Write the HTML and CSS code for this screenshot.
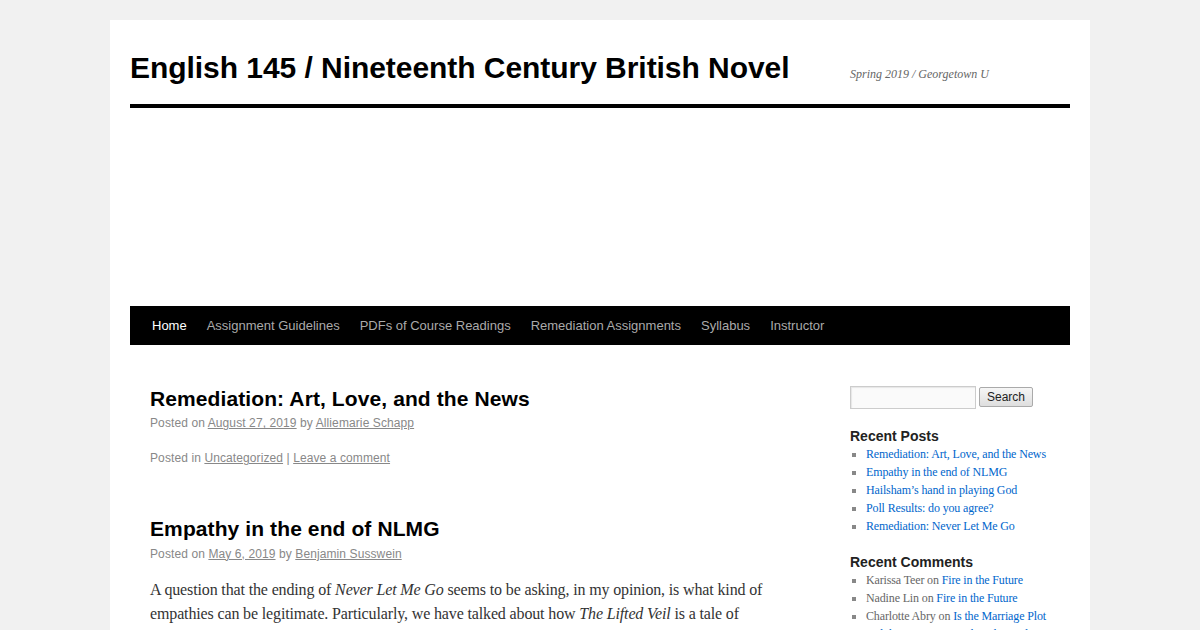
FILE: index.html
```html
<!DOCTYPE html>
<html>
<head>
  <meta charset="UTF-8">
  <link rel="stylesheet" href="styles.css">
</head>
<body>
  <div class="wrapper">
    <div class="header">
      <div class="branding">
        <h1 class="site-title"><a href="#">English 145 / Nineteenth Century British Novel</a></h1>
        <div class="site-description">Spring 2019 / Georgetown U</div>
      </div>
      <div class="header-image"></div>
      <div class="access">
        <ul class="menu">
          <li class="current"><a href="#">Home</a></li>
          <li><a href="#">Assignment Guidelines</a></li>
          <li><a href="#">PDFs of Course Readings</a></li>
          <li><a href="#">Remediation Assignments</a></li>
          <li><a href="#">Syllabus</a></li>
          <li><a href="#">Instructor</a></li>
        </ul>
      </div>
    </div>

    <div class="main">
      <div class="content">
        <div class="post">
          <h2 class="entry-title"><a href="#">Remediation: Art, Love, and the News</a></h2>
          <div class="entry-meta">Posted on <a href="#">August 27, 2019</a> by <a href="#">Alliemarie Schapp</a></div>
          <div class="entry-utility">Posted in <a href="#">Uncategorized</a> | <a href="#">Leave a comment</a></div>
        </div>

        <div class="post">
          <h2 class="entry-title"><a href="#">Empathy in the end of NLMG</a></h2>
          <div class="entry-meta">Posted on <a href="#">May 6, 2019</a> by <a href="#">Benjamin Susswein</a></div>
          <div class="entry-summary">
            <p>A question that the ending of <em>Never Let Me Go</em> seems to be asking, in my opinion, is what kind of empathies can be legitimate. Particularly, we have talked about how <em>The Lifted Veil</em> is a tale of excessive sympathy, of knowing too well what others think and feel.</p>
          </div>
        </div>
      </div>

      <div class="sidebar">
        <div class="widget search-widget">
          <form class="search-form">
            <input type="text" class="search-input">
            <button type="button" class="search-button">Search</button>
          </form>
        </div>

        <div class="widget">
          <h3 class="widget-title">Recent Posts</h3>
          <ul>
            <li><a href="#">Remediation: Art, Love, and the News</a></li>
            <li><a href="#">Empathy in the end of NLMG</a></li>
            <li><a href="#">Hailsham’s hand in playing God</a></li>
            <li><a href="#">Poll Results: do you agree?</a></li>
            <li><a href="#">Remediation: Never Let Me Go</a></li>
          </ul>
        </div>

        <div class="widget">
          <h3 class="widget-title">Recent Comments</h3>
          <ul>
            <li>Karissa Teer on <a href="#">Fire in the Future</a></li>
            <li>Nadine Lin on <a href="#">Fire in the Future</a></li>
            <li>Charlotte Abry on <a href="#">Is the Marriage Plot and the 19 Century Political Novel?</a></li>
          </ul>
        </div>
      </div>
    </div>
  </div>
</body>
</html>
```

FILE: styles.css
```css
body {
  margin: 0;
  background: #f1f1f1;
  color: #666;
  font-family: "Liberation Serif", serif;
}

a {
  color: #0066cc;
  text-decoration: none;
}

.wrapper {
  width: 940px;
  margin: 20px auto 0;
  padding: 0 20px 40px;
  background: #fff;
}

.header {
  padding-top: 30px;
}

.branding {
  display: flex;
  align-items: flex-start;
}

.site-title {
  width: 700px;
  margin: 0 0 18px 0;
  font-family: "Liberation Sans", Arial, sans-serif;
  font-size: 30px;
  line-height: 36px;
  font-weight: bold;
  letter-spacing: -0.05px;
}

.site-title a {
  color: #000;
}

.site-description {
  width: 220px;
  margin: 15px 0 18px auto;
  font-size: 12px;
  line-height: 18px;
  font-style: italic;
  color: #666;
}

.header-image {
  height: 198px;
  border-top: 4px solid #000;
  border-bottom: 1px solid #000;
}

.access {
  background: #000;
  height: 38px;
}

.menu {
  display: flex;
  list-style: none;
  margin: 0 0 0 12px;
  padding: 0;
  font-family: "Liberation Sans", Arial, sans-serif;
  font-size: 13px;
}

.menu a {
  display: block;
  padding: 0 10px;
  line-height: 38px;
  color: #aaa;
}

.menu .current a {
  color: #fff;
}

.main {
  display: flex;
  padding-top: 40px;
}

.content {
  width: 640px;
  margin-left: 20px;
}

.post {
  margin-bottom: 48px;
}

.entry-title {
  margin: 0;
  font-family: "Liberation Sans", Arial, sans-serif;
  font-size: 21px;
  line-height: 1.3em;
  font-weight: bold;
  letter-spacing: 0.1px;
}

.entry-title a {
  color: #000;
}

.entry-meta,
.entry-utility {
  font-family: "Liberation Sans", Arial, sans-serif;
  font-size: 12px;
  line-height: 18px;
  color: #888;
  margin-top: 2px;
  letter-spacing: 0.1px;
}

.entry-meta a,
.entry-utility a {
  color: #888;
  text-decoration: underline;
}

.entry-utility {
  margin-top: 17px;
}

.entry-summary {
  padding-top: 15px;
}

.entry-summary p {
  margin: 0 0 24px;
  font-size: 16px;
  line-height: 24px;
  color: #333;
  letter-spacing: -0.14px;
}

.sidebar {
  width: 220px;
  margin-left: auto;
}

.widget {
  margin-bottom: 18px;
}

.search-form {
  display: flex;
  align-items: center;
  height: 24px;
}

.search-input {
  box-sizing: border-box;
  width: 126px;
  height: 23px;
  margin: 0;
  border: 1px solid #ccc;
  background: #fafafa;
  box-shadow: inset 1px 1px 1px rgba(0, 0, 0, 0.08);
}

.search-button {
  height: 20px;
  margin-left: 3px;
  padding: 0 7px;
  border: 1px solid #aaa;
  border-radius: 2px;
  background: linear-gradient(#f6f6f6, #dedede);
  color: #222;
  font-family: "Liberation Sans", Arial, sans-serif;
  font-size: 12px;
}

.widget-title {
  margin: 0;
  font-family: "Liberation Sans", Arial, sans-serif;
  font-size: 14px;
  line-height: 18px;
  font-weight: bold;
  color: #222;
}

.widget ul {
  margin: 0 0 0 16px;
  padding: 0 20px 0 0;
  list-style: square;
  font-size: 12px;
  line-height: 18px;
  color: #666;
  letter-spacing: -0.14px;
}

.widget li::marker {
  color: #888;
}
```
